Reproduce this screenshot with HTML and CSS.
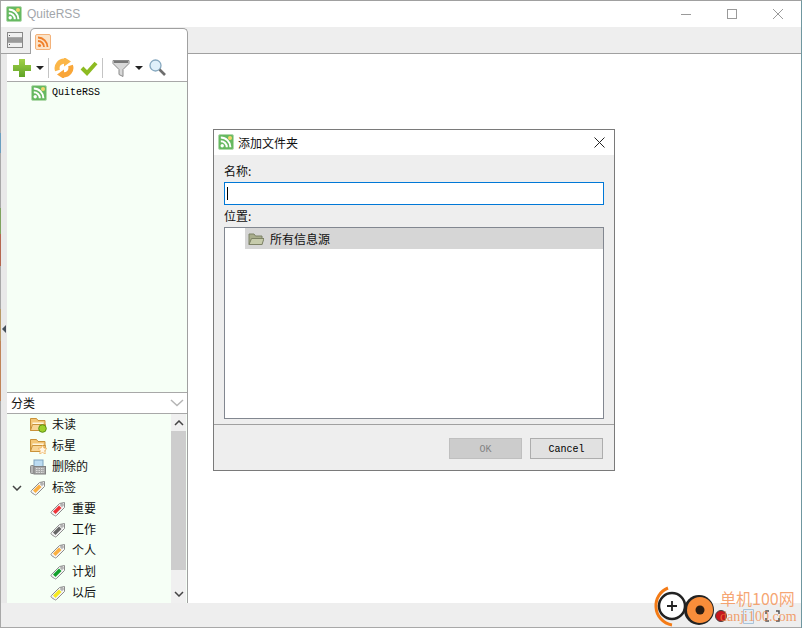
FILE: index.html
```html
<!DOCTYPE html>
<html lang="zh">
<head>
  <meta charset="UTF-8" />
  <title>QuiteRSS</title>
  <link rel="stylesheet" href="styles.css">
</head>
<body>
  <svg class="defs" width="0" height="0">
    <defs>
      <linearGradient id="green-grad" x1="0" y1="0" x2="0" y2="1">
        <stop offset="0" stop-color="#a2d149"/>
        <stop offset="1" stop-color="#5fa327"/>
      </linearGradient>
      <symbol id="rss-green" viewBox="0 0 16 16">
        <rect x="0.5" y="0.5" width="15" height="15" rx="1.5" fill="#66b961" stroke="#b2dbae"/>
        <circle cx="4.2" cy="11.8" r="1.7" fill="#fff"/>
        <path d="M2.800 7.200a6 6 0 0 1 6 6M2.800 3.600a9.600 9.600 0 0 1 9.600 9.600" fill="none" stroke="#fff" stroke-width="2"/>
        <circle cx="12" cy="4" r="2" fill="#f2d76b"/>
      </symbol>
      <symbol id="tag" viewBox="0 0 16 16">
        <path d="M1.500 10.500L9.500 2.500 14.500 1.500 14.500 6.500 6.500 14.500q-1 1-2 0L1.500 12.500q-1-1 0-2z" fill="#f4f4f4" stroke="#8c8c8c"/>
        <circle cx="12" cy="4" r="1.200" fill="#fff" stroke="#777" stroke-width=".8"/>
      </symbol>
      <symbol id="folder" viewBox="0 0 16 16">
        <path d="M.5 13.500V1.500h6l1.500 2h7v10z" fill="#f3c677" stroke="#c9923a"/>
        <path d="M2.500 5.500h11v3h-11z" fill="#fff6df"/>
        <path d="M.5 13.500l2-6h13l-1.500 6z" fill="#f8d596" stroke="#c9923a"/>
      </symbol>
    </defs>
  </svg>

  <div class="window">
    <div class="titlebar">
      <svg class="app-icon"><use href="#rss-green"/></svg>
      <span class="app-title">QuiteRSS</span>
      <div class="win-btns">
        <svg width="12" height="12" viewBox="0 0 12 12"><path d="M1 6.500h10" stroke="#9a9a9a"/></svg>
        <svg width="12" height="12" viewBox="0 0 12 12"><rect x="1.500" y="1.500" width="9" height="9" fill="none" stroke="#9a9a9a"/></svg>
        <svg width="12" height="12" viewBox="0 0 12 12"><path d="M1 1l10 10M11 1L1 11" stroke="#9a9a9a"/></svg>
      </div>
    </div>

    <div class="tabbar">
      <div class="tab-list">
        <svg width="16" height="16" viewBox="0 0 16 16"><rect x=".5" y=".5" width="15" height="15" fill="#f0f0f0" stroke="#888"/><path d="M1 6h14v4H1z" fill="#9a9a9a"/><path d="M2 3.500h1M2 12.500h1" stroke="#555"/><path d="M1 5.500h14M1 10.500h14" stroke="#aaa"/></svg>
      </div>
      <div class="tab-active">
        <svg width="16" height="16" viewBox="0 0 16 16"><rect x=".5" y=".5" width="15" height="15" rx="1.500" fill="#fbe3c8" stroke="#f3b27a"/><circle cx="4.500" cy="11.500" r="1.600" fill="#f0802a"/><path d="M3 7a6 6 0 0 1 6 6M3 3.500A9.500 9.500 0 0 1 12.500 13" fill="none" stroke="#f0802a" stroke-width="1.800"/></svg>
      </div>
    </div>

    <div class="main">
      <div class="gutter"><span class="splitter-arrow"></span></div>

      <div class="side">
        <div class="toolbar">
          <svg width="18" height="18" viewBox="0 0 18 18"><path d="M9 0v18M0 9h18" stroke="url(#green-grad)" stroke-width="6"/></svg>
          <span class="caret"></span>
          <span class="tb-sep"></span>
          <svg width="20" height="20" viewBox="0 0 20 20"><path d="M3.500 12.500A7 7 0 0 1 11 3.200" fill="none" stroke="#fbb648" stroke-width="5"/><path d="M10 -1l7 4.500-7 5z" fill="#fbb648"/><path d="M16.500 7.500A7 7 0 0 1 9 16.800" fill="none" stroke="#f9a638" stroke-width="5"/><path d="M10 21l-7-4.500 7-5z" fill="#f9a638"/></svg>
          <svg class="tb-check" width="18" height="18" viewBox="0 0 18 18"><path d="M2 9l5 5 9-10" fill="none" stroke="#8dbb22" stroke-width="4"/></svg>
          <span class="tb-sep"></span>
          <svg class="tb-filter" width="18" height="18" viewBox="0 0 18 18"><path d="M1 1.500h16v3l-6 6v7l-4-2v-5l-6-6z" fill="#d8d8d8" stroke="#8a8a8a"/><path d="M2 3h14" stroke="#777" stroke-width="2"/></svg>
          <span class="caret"></span>
          <svg class="tb-search" width="17" height="17" viewBox="0 0 17 17"><circle cx="6.500" cy="6.500" r="5.500" fill="#dff0fa" stroke="#86a8bf" stroke-width="1.300"/><path d="M10.500 10.500l5.500 5.500" stroke="#6d6d6d" stroke-width="2.600"/></svg>
        </div>

        <div class="feed-tree">
          <div class="tree-row feed-row">
            <svg class="row-icon"><use href="#rss-green"/></svg>
            <span class="mono">QuiteRSS</span>
          </div>
        </div>

        <div class="combo">
          <span>分类</span>
          <svg width="14" height="8" viewBox="0 0 14 8"><path d="M1 1l6 5.500L13 1" fill="none" stroke="#b5b5b5" stroke-width="1.500"/></svg>
        </div>

        <div class="cat-list">
          <div class="cat-rows">
            <div class="cat-row">
              <svg class="row-icon"><use href="#folder"/></svg>
              <svg class="badge" width="9" height="9"><circle cx="4.500" cy="4.500" r="3.800" fill="#9ed02a" stroke="#5b8f14"/></svg>
              <span>未读</span>
            </div>
            <div class="cat-row">
              <svg class="row-icon"><use href="#folder"/></svg>
              <svg class="badge" width="9" height="9" viewBox="0 0 8 8"><path d="M4 0l1.200 2.600L8 3 6 5l.5 3L4 6.600 1.500 8 2 5 0 3l2.800-.4z" fill="#fff6e6" stroke="#eba94e" stroke-width=".6"/></svg>
              <span>标星</span>
            </div>
            <div class="cat-row">
              <svg class="row-icon" viewBox="0 0 16 16"><rect x="4" y="1" width="9" height="8" fill="#bcdcf2" stroke="#7fa4bf"/><rect x=".5" y="6.500" width="3.500" height="8" rx="1" fill="#b5b5b5" stroke="#8a8a8a"/><rect x="4" y="7.500" width="11.500" height="7.500" fill="#aaa" stroke="#808080"/><path d="M6 9.500h8M6 11.500h8M6 13.500h8" stroke="#ddd" stroke-dasharray="1.500 1"/></svg>
              <span>删除的</span>
            </div>
            <div class="cat-row">
              <svg class="chevron" width="10" height="6" viewBox="0 0 10 6"><path d="M1 1l4 4 4-4" fill="none" stroke="#444" stroke-width="1.500"/></svg>
              <svg class="row-icon" viewBox="0 0 16 16"><use href="#tag"/><path d="M9 4.500l2.500 2.500-6 6L3 10.500z" fill="#fbb040"/></svg>
              <span>标签</span>
            </div>
            <div class="cat-row sub">
              <svg class="row-icon" viewBox="0 0 16 16"><use href="#tag"/><path d="M9 4.500l2.500 2.500-6 6L3 10.500z" fill="#ee3338"/></svg>
              <span>重要</span>
            </div>
            <div class="cat-row sub">
              <svg class="row-icon" viewBox="0 0 16 16"><use href="#tag"/><path d="M9 4.500l2.500 2.500-6 6L3 10.500z" fill="#666"/></svg>
              <span>工作</span>
            </div>
            <div class="cat-row sub">
              <svg class="row-icon" viewBox="0 0 16 16"><use href="#tag"/><path d="M9 4.500l2.500 2.500-6 6L3 10.500z" fill="#fbb040"/></svg>
              <span>个人</span>
            </div>
            <div class="cat-row sub">
              <svg class="row-icon" viewBox="0 0 16 16"><use href="#tag"/><path d="M9 4.500l2.500 2.500-6 6L3 10.500z" fill="#12a02c"/></svg>
              <span>计划</span>
            </div>
            <div class="cat-row sub">
              <svg class="row-icon" viewBox="0 0 16 16"><use href="#tag"/><path d="M9 4.500l2.500 2.500-6 6L3 10.500z" fill="#f6ea1e"/></svg>
              <span>以后</span>
            </div>
          </div>
          <div class="scrollbar">
            <svg class="sb-arrow" width="10" height="6" viewBox="0 0 10 6"><path d="M1 5l4-4 4 4" fill="none" stroke="#444" stroke-width="1.500"/></svg>
            <div class="sb-thumb"></div>
            <svg class="sb-arrow sb-down" width="10" height="6" viewBox="0 0 10 6"><path d="M1 1l4 4 4-4" fill="none" stroke="#444" stroke-width="1.500"/></svg>
          </div>
        </div>
      </div>

      <div class="content"></div>
    </div>

    <div class="statusbar"></div>

    <div class="dialog">
      <div class="dlg-title">
        <svg class="app-icon"><use href="#rss-green"/></svg>
        <span>添加文件夹</span>
        <svg class="dlg-close" width="11" height="11" viewBox="0 0 11 11"><path d="M.5.5l10 10M10.500.5l-10 10" stroke="#222"/></svg>
      </div>
      <div class="dlg-body">
        <label>名称:</label>
        <div class="dlg-input"><span class="cursor"></span></div>
        <label>位置:</label>
        <div class="dlg-tree">
          <div class="dlg-row">
            <svg width="16" height="14" viewBox="0 0 16 14"><path d="M1 12.500V2h5l1.500 2H14v8.500z" fill="#a8ad8c" stroke="#7d8266"/><path d="M1 12.500l2.500-6H16l-2 6z" fill="#c6cbab" stroke="#7d8266"/></svg>
            <span>所有信息源</span>
          </div>
        </div>
      </div>
      <div class="dlg-footer">
        <button class="btn btn-off">OK</button>
        <button class="btn">Cancel</button>
      </div>
    </div>

    <div class="watermark">
      <svg width="148" height="48" viewBox="0 0 148 48">
        <path d="M89.500 29.500h10v14h-10z" fill="#e4eef6" stroke="#a9c3d8"/>
        <path d="M112 34v-3h3M122 31h3v3M112 38v3h3M125 38v3h-3" fill="none" stroke="#555" stroke-width="1.500"/>
        <path d="M14 8A19 19 0 0 0 2 27a19 19 0 0 0 16 18" fill="none" stroke="#f47b16" stroke-width="3"/>
        <circle cx="18" cy="26" r="13" fill="#fff" stroke="#222" stroke-width="2.500"/>
        <path d="M13 26h10M18 21v10" stroke="#222" stroke-width="1.800"/>
        <circle cx="45" cy="30" r="15" fill="#222"/>
        <circle cx="46" cy="30" r="13" fill="#f98d3a"/>
        <circle cx="46" cy="30" r="4.500" fill="#2b1d14"/>
        <circle cx="67" cy="36" r="5.500" fill="#c8161d" stroke="#444"/>
      </svg>
      <div class="wm-text">
        <span class="wm-top">单机100网</span>
        <span class="wm-bottom">danji100.com</span>
      </div>
    </div>
  </div>
</body>
</html>
```

FILE: styles.css
```css
* {
  box-sizing: border-box;
}

body {
  margin: 0;
  width: 802px;
  height: 628px;
  overflow: hidden;
  font-family: "Noto Sans CJK SC", sans-serif;
  font-size: 12px;
  color: #111;
  background: #fff;
}

.defs {
  position: absolute;
}

/* the left 1px column is the desktop showing through the window edge */
.window {
  position: relative;
  width: 802px;
  height: 628px;
  padding-left: 1px;
  background: linear-gradient(to bottom,
    #a8a8a8 0, #a8a8a8 132px,
    #6a9fc0 132px, #6a9fc0 152px,
    #a8a8a8 152px, #a8a8a8 207px,
    #7fa35f 207px, #7fa35f 233px,
    #b5674f 233px, #b5674f 265px,
    #a8a8a8 265px, #a8a8a8 308px,
    #b89a66 308px, #b89a66 340px,
    #c08458 340px, #c08458 400px,
    #a8a8a8 400px) left top / 1px 100% no-repeat, #fff;
  border-top: 1px solid #a0a0a0;
  border-right: 1px solid #6f97a0;
  display: flex;
  flex-direction: column;
}

.titlebar {
  height: 26px;
  display: flex;
  align-items: center;
  padding-left: 5px;
  background: #fff;
  flex: none;
}

.app-icon {
  width: 16px;
  height: 16px;
  flex: none;
}

.app-title {
  margin-left: 5px;
  font-family: "Liberation Sans", sans-serif;
  font-size: 12px;
  color: #a2a6aa;
}

.win-btns {
  margin-left: auto;
  display: flex;
  gap: 34px;
  padding-right: 17px;
  align-items: center;
}

.tabbar {
  height: 27px;
  flex: none;
  display: flex;
  align-items: flex-end;
  background: #eeeeee;
  border-bottom: 1px solid #a0a0a0;
}

.tab-list {
  width: 29px;
  height: 26px;
  padding: 5px 0 0 6px;
}

.tab-active {
  width: 158px;
  height: 26px;
  margin-bottom: -1px;
  padding: 5px 0 0 4px;
  background: #fff;
  border: 1px solid #a0a0a0;
  border-bottom: 0;
  border-radius: 5px 5px 0 0;
}

.main {
  flex: 1;
  min-height: 0;
  display: flex;
}

.gutter {
  width: 6px;
  background: #e9e9e9;
  display: flex;
  align-items: center;
  flex: none;
}

.splitter-arrow {
  margin-left: 1px;
  border-right: 4px solid #444f5a;
  border-top: 4px solid transparent;
  border-bottom: 4px solid transparent;
}

.side {
  width: 181px;
  flex: none;
  display: flex;
  flex-direction: column;
  border-right: 1px solid #a0a0a0;
}

.toolbar {
  height: 28px;
  flex: none;
  display: flex;
  align-items: center;
  gap: 5px;
  padding-left: 6px;
  background: #fff;
  border-bottom: 1px solid #a8a8a8;
}

.caret {
  border-top: 4px solid #222;
  border-left: 4px solid transparent;
  border-right: 4px solid transparent;
}

.tb-sep {
  width: 1px;
  height: 20px;
  margin-left: -1px;
  background: #c4c4c4;
}

.tb-check {
  margin-left: 1px;
}

.tb-filter {
  margin-left: 4px;
}

.tb-search {
  margin-left: 1px;
}

.feed-tree {
  flex: 1;
  min-height: 0;
  background: #f6fff6;
  border-bottom: 1px solid #a8a8a8;
}

.tree-row {
  height: 21px;
  display: flex;
  align-items: center;
  gap: 5px;
  padding-left: 24px;
}

.row-icon {
  width: 16px;
  height: 16px;
  flex: none;
}

.mono {
  font-family: "Liberation Mono", monospace;
  font-size: 10px;
  color: #000;
}

.combo {
  height: 21px;
  flex: none;
  display: flex;
  align-items: center;
  justify-content: space-between;
  padding: 0 3px 0 4px;
  background: #fff;
  border-bottom: 1px solid #a8a8a8;
}

.combo span,
.cat-row span {
  margin-top: -2px;
}

.cat-list {
  height: 189px;
  flex: none;
  display: flex;
  background: #f6fff6;
}

.cat-rows {
  flex: 1;
  min-width: 0;
}

.cat-row {
  position: relative;
  height: 21px;
  display: flex;
  align-items: center;
  gap: 6px;
  padding-left: 23px;
}

.cat-row.sub {
  padding-left: 43px;
}

.chevron {
  position: absolute;
  left: 5px;
  top: 8px;
}

.badge {
  position: absolute;
  left: 31px;
  top: 10px;
}

.scrollbar {
  width: 15px;
  margin-right: 1px;
  background: #f0f0f0;
  display: flex;
  flex-direction: column;
  align-items: center;
}

.sb-arrow {
  flex: none;
  margin: 6px 0;
}

.sb-down {
  margin-top: auto;
}

.sb-thumb {
  align-self: stretch;
  height: 139px;
  margin-top: -1px;
  background: #cdcdcd;
}

.content {
  flex: 1;
  background: #fff;
}

.statusbar {
  height: 25px;
  flex: none;
  background: #eeeeee;
  border-bottom: 1px solid #a8a8a8;
}

.dialog {
  position: absolute;
  left: 213px;
  top: 128px;
  width: 402px;
  height: 342px;
  display: flex;
  flex-direction: column;
  background: #eeeeee;
  border: 1px solid #7a7a7a;
}

.dlg-title {
  height: 25px;
  flex: none;
  display: flex;
  align-items: center;
  gap: 4px;
  padding: 0 0 1px 4px;
  background: #fff;
}

.dlg-close {
  margin-left: auto;
  margin-right: 9px;
}

.dlg-body {
  flex: 1;
  min-height: 0;
  display: flex;
  flex-direction: column;
  padding: 8px 10px 5px;
}

.dlg-body label {
  height: 19px;
  line-height: 16px;
  flex: none;
}

.dlg-input {
  height: 23px;
  flex: none;
  margin-bottom: 3px;
  padding: 4px 2px;
  background: #fff;
  border: 1px solid #0078d7;
}

.cursor {
  display: block;
  width: 1px;
  height: 13px;
  background: #000;
}

.dlg-tree {
  flex: 1;
  background: #fff;
  border: 1px solid #828790;
  padding-left: 20px;
}

.dlg-row {
  height: 21px;
  display: flex;
  align-items: center;
  gap: 6px;
  padding-left: 3px;
  background: #d6d6d6;
}

.dlg-footer {
  height: 46px;
  flex: none;
  display: flex;
  justify-content: flex-end;
  align-items: flex-start;
  gap: 8px;
  padding: 13px 11px 0 0;
  border-top: 1px solid #a0a0a0;
}

.btn {
  width: 73px;
  height: 21px;
  padding: 1px 0 0;
  font-family: "Liberation Mono", monospace;
  font-size: 10px;
  color: #000;
  background: #e1e1e1;
  border: 1px solid #adadad;
}

.btn-off {
  color: #838383;
  background: #cccccc;
  border-color: #bfbfbf;
}

.watermark {
  position: absolute;
  left: 654px;
  top: 579px;
  width: 148px;
  height: 48px;
}

.watermark svg {
  position: absolute;
  left: 0;
  top: 0;
}

.wm-text {
  position: absolute;
  left: 66px;
  top: 7px;
  display: flex;
  flex-direction: column;
}

.wm-top {
  font-size: 16px;
  line-height: 22px;
  color: rgba(244, 150, 90, 0.85);
}

.wm-bottom {
  font-size: 14px;
  line-height: 16px;
  font-family: "Liberation Serif", serif;
  color: rgba(240, 130, 60, 0.75);
}
```
